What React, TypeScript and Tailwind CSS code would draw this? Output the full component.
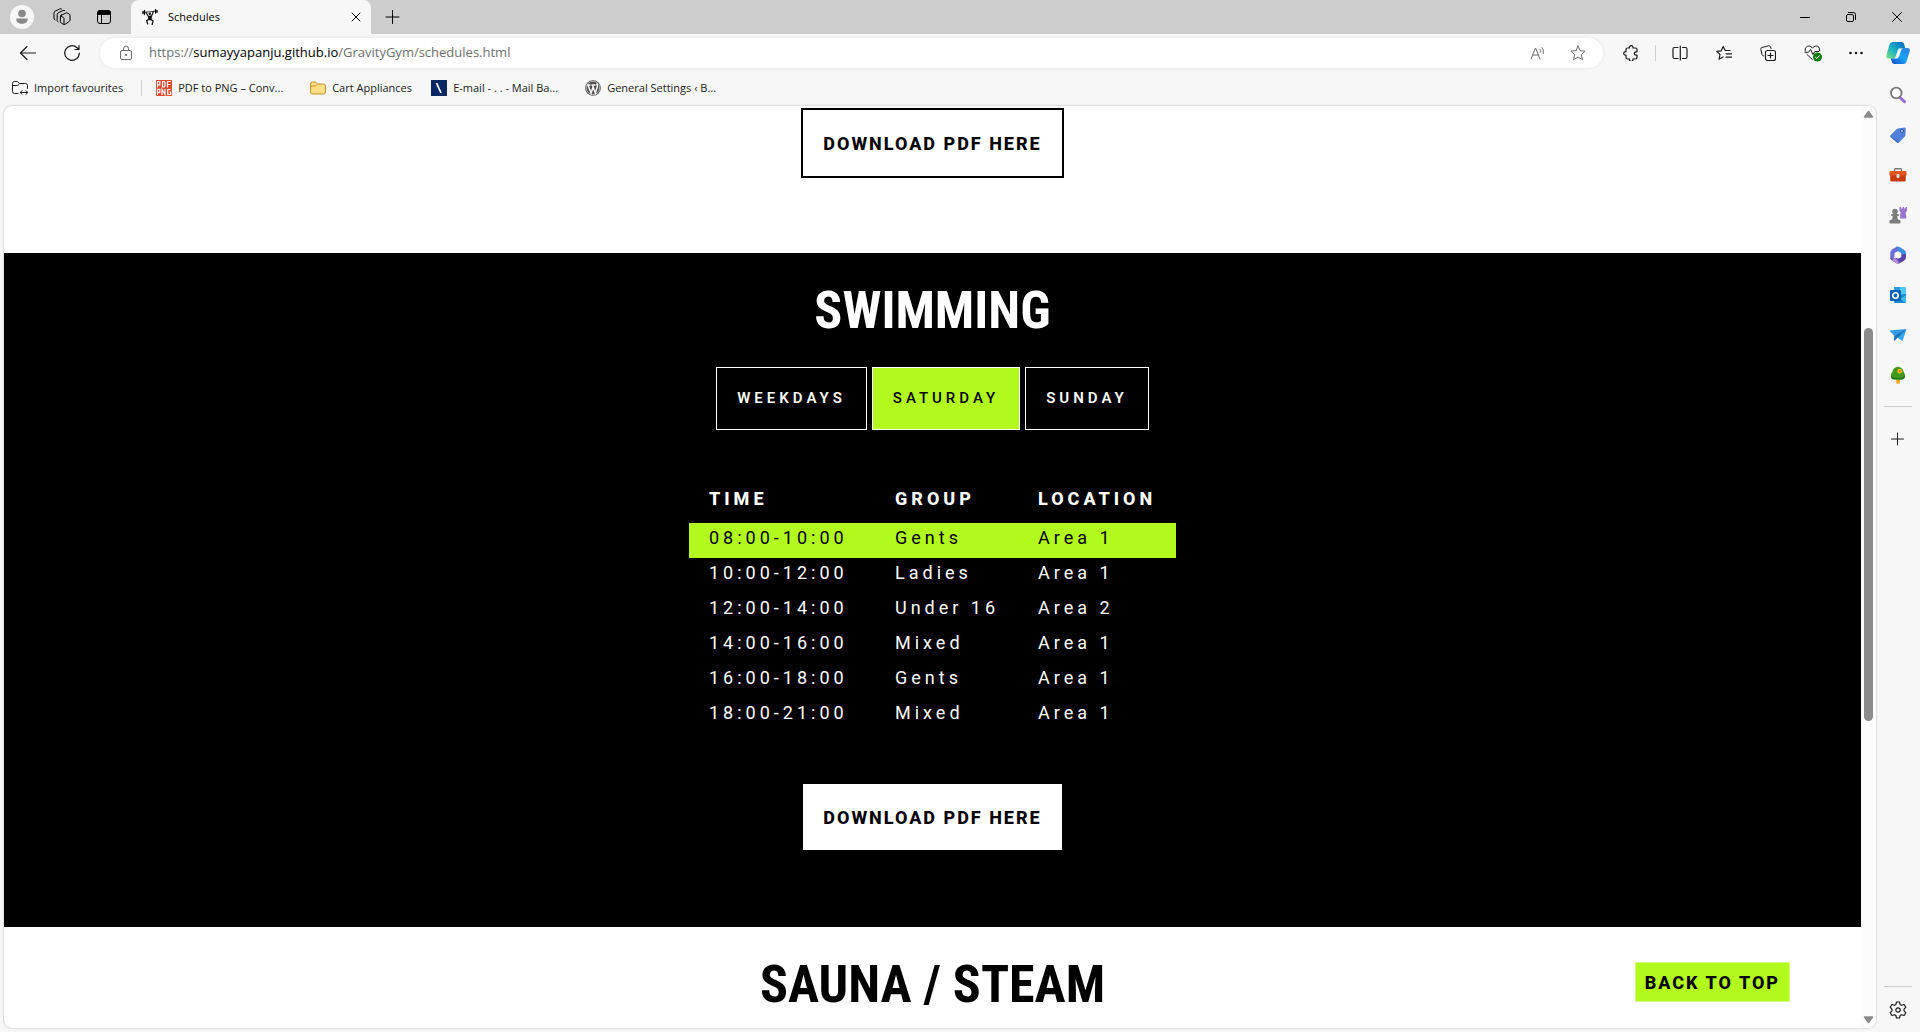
import type { ReactNode } from "react";

type IconProps = { children: ReactNode; size?: string; box?: string };

function Icon({ children, size = "size-4", box = "0 0 16 16" }: IconProps) {
  return (
    <svg
      className={"shrink-0 " + size}
      viewBox={box}
      fill="none"
      stroke="currentColor"
      strokeWidth="1"
      strokeLinecap="round"
      strokeLinejoin="round"
      aria-hidden="true"
    >
      {children}
    </svg>
  );
}

function TitleBar() {
  return (
    <header className="flex h-[34px] shrink-0 items-stretch bg-[#cdcdcd] text-black">
      <div className="flex w-[131px] shrink-0 items-center rounded-br-lg pl-[10px]">
        <button aria-label="Profile" className="size-6 rounded-full bg-[#f7f7f7]">
          <Icon size="size-6" box="0 0 24 24">
            <g fill="#8a8a8a" stroke="none">
              <circle cx="12" cy="8.5" r="3.8" />
              <path d="M6.3 13.5h11.4v.8c0 3-2.6 4.5-5.700 4.500s-5.700-1.500-5.700-4.500z" />
            </g>
          </Icon>
        </button>
        <button aria-label="Workspaces" className="ml-[19px]">
          <Icon size="size-[18px]" box="0 0 18 18">
            <path d="M8.200 7.200l4.500-2.100q1-.4 1.900.1l1.500.8q.9.5.9 1.500v4.500q0 1-.8 1.500l-4 2.700q-1 .6-2 0l-2-1.200q-.8-.5-.8-1.500V8.200q0-.7.800-1z" />
            <path d="M7.800 8l2.600 1.500q.6.4.6 1.100v5.600" />
            <path d="M5.200 14l-.6-.6q-.4-.5-.4-1.200V6.500q0-1 .8-1.500l5-2.500q.9-.4 1.800.1" />
            <path d="M2.200 12l-.8-.8q-.4-.5-.4-1.200V4.800q0-1 .8-1.500l5-2.400q.9-.4 1.800.1" />
          </Icon>
        </button>
        <button aria-label="Tab actions menu" className="ml-[25px]">
          <Icon>
            <rect x="1.500" y="1.500" width="13" height="13" rx="2.500" />
            <path d="M1.500 5V4q0-2.500 2.500-2.500h8q2.500 0 2.500 2.500v1z" fill="currentColor" />
            <path d="M5.500 5v9.500" />
          </Icon>
        </button>
      </div>
      <div className="flex w-[240px] shrink-0 items-center rounded-t-lg bg-[#f7f7f7] pl-[11px] pr-[7px]">
        <svg className="size-4 shrink-0 bg-white" viewBox="0 0 16 16" aria-hidden="true">
          <g stroke="#111" fill="none" strokeLinecap="round">
            <path d="M1 3.500L15 2" strokeWidth=".8" />
            <path d="M2.500 1.500v4M1 2.500v2M13.500 .5v3.500M15 1.500v2" strokeWidth="1.300" />
            <path d="M4 3.500l2.500 4M11.500 2.500L9.500 7" strokeWidth="1.200" />
            <path d="M6.500 10.500l-1.800 1 1 3.500M9 10.500l2 1.500-.8 3.500" strokeWidth="1.300" />
          </g>
          <path d="M6 7l4-.8-.5 5H6.300z" fill="#111" />
          <circle cx="7.800" cy="4.700" r="1.200" fill="#111" />
        </svg>
        <span className="ml-[10px] flex-1 text-[11px]">Schedules</span>
        <button aria-label="Close tab" className="grid size-4 place-items-center">
          <Icon size="size-[10px]" box="0 0 10 10">
            <path d="M1 1l8 8M9 1L1 9" />
          </Icon>
        </button>
      </div>
      <button aria-label="New tab" className="ml-[14px]">
        <Icon>
          <path d="M7.500 1.500v13M1 8h13" />
        </Icon>
      </button>
      <div className="flex-1" />
      <div className="flex items-center gap-[34px] pr-[17px]">
        <button aria-label="Minimise">
          <Icon size="size-3" box="0 0 12 12">
            <path d="M1.500 6.500h9" />
          </Icon>
        </button>
        <button aria-label="Restore">
          <Icon size="size-3" box="0 0 12 12">
            <rect x="1.500" y="3.500" width="7" height="7" rx="1.500" />
            <path d="M3.500 1.500h5q2 0 2 2v5" />
          </Icon>
        </button>
        <button aria-label="Close window">
          <Icon size="size-3" box="0 0 12 12">
            <path d="M1.500 1.500l9 9M10.500 1.500l-9 9" />
          </Icon>
        </button>
      </div>
    </header>
  );
}

function Toolbar() {
  return (
    <div className="flex h-[38px] shrink-0 items-center text-[#1b1b1b]">
      <button aria-label="Back" className="ml-[19px]">
        <Icon size="size-[18px]" box="0 0 18 18">
          <path d="M16.500 9H1.500M8 2.500L1.500 9 8 15.500" strokeWidth="1.200" />
        </Icon>
      </button>
      <button aria-label="Refresh" className="ml-[26px]">
        <Icon size="size-[18px]" box="0 0 18 18">
          <path d="M16.300 9A7.300 7.300 0 1 1 13.800 3.500L15.800 5.300M16 1.500v4h-4" strokeWidth="1.200" />
        </Icon>
      </button>
      <div className="ml-[19px] flex h-[30px] min-w-0 flex-1 items-center rounded-full bg-white pl-[18px] pr-[17px] text-[#6f6f6f] shadow-[0_0_4px_rgba(0,0,0,0.08)]">
        <Icon>
          <rect x="2.500" y="5.500" width="11" height="9" rx="1.500" />
          <path d="M5.500 5.500V3.800Q5.500 1 8 1t2.500 2.800v1.700" />
          <circle cx="8" cy="10" r=".6" fill="currentColor" />
        </Icon>
        <p className="ml-[15px] flex-1 truncate text-[13px]">
          https://<span className="text-black">sumayyapanju.github.io</span>/GravityGym/schedules.html
        </p>
        <button aria-label="Read aloud">
          <Icon>
            <path d="M1 14L5.500 3 10 14M2.600 10h5.800" />
            <path d="M10 4q1.200 1.300.8 3.200M12 2.500q2.300 2.300 1.300 6" />
          </Icon>
        </button>
        <button aria-label="Add to favourites" className="ml-6">
          <Icon>
            <path d="M8 1l2.100 4.600 5 .6-3.700 3.400 1 5L8 12.100l-4.400 2.500 1-5L.9 6.200l5-.6z" />
          </Icon>
        </button>
      </div>
      <div className="ml-5 flex items-center text-[#1b1b1b]">
        <button aria-label="Extensions">
          <Icon>
            <path d="M4.500 3h2a1.800 1.800 0 1 1 3.400 0h2.600q1.500 0 1.500 1.500v2.300h-1a1.700 1.700 0 0 0 0 3.400h1v2.300q0 1.500-1.500 1.500H9.900a1.800 1.800 0 1 1-3.400 0h-2q-1.500 0-1.500-1.500V10a1.700 1.700 0 1 1 0-3.200V4.500Q3 3 4.500 3z" strokeWidth="1.200" />
          </Icon>
        </button>
        <span className="ml-4 h-4 w-px bg-[#cfcfcf]" />
        <button aria-label="Split screen" className="ml-4">
          <Icon>
            <path d="M6 2.500H2.500q-1.500 0-1.500 1.500v8q0 1.500 1.500 1.500H6M10.500 2.500h3q1.500 0 1.500 1.500v8q0 1.500-1.500 1.500h-3M8.300 1v14" strokeWidth="1.200" />
          </Icon>
        </button>
        <button aria-label="Favourites" className="ml-7">
          <Icon>
            <path d="M14 5.500H9.300L7.200 1.500 5.200 5.800.8 6.400 4 9.500l-.9 4.700L7 12M10 8.800h5.500M10 12.200h5.500" strokeWidth="1.200" />
          </Icon>
        </button>
        <button aria-label="Collections" className="ml-7">
          <Icon>
            <path d="M3.500 11Q2.500 11 2.100 9.700L.8 4.500Q.5 3 1.900 2.500L8.500.8q1.500-.3 2 1L11 3.500" />
            <rect x="5.500" y="5.500" width="10" height="10" rx="2" strokeWidth="1.200" />
            <path d="M10.500 8v5M8 10.500h5" strokeWidth="1.200" />
          </Icon>
        </button>
        <button aria-label="Browser essentials" className="ml-7">
          <Icon size="size-[18px]" box="0 0 18 18">
            <path d="M1.200 7C.7 3.500 3 2 4.800 2 6.500 2 7.700 3 8.500 4.200 9.300 3 10.500 2 12.200 2c2 0 4 1.600 3.500 4.800M1 8.300h3.500L6.500 5.500l2.500 5 1.800-3h4M3 10.500l5.300 5" />
            <circle cx="13.500" cy="13" r="4.500" fill="#107c10" stroke="none" />
            <path d="M11.500 13.300l1.300 1.200 2.600-2.800" stroke="#fff" />
          </Icon>
        </button>
        <button aria-label="Settings and more" className="ml-[26px]">
          <Icon>
            <g fill="currentColor" stroke="none">
              <circle cx="2.500" cy="8" r="1.300" />
              <circle cx="8" cy="8" r="1.300" />
              <circle cx="13.500" cy="8" r="1.300" />
            </g>
          </Icon>
        </button>
      </div>
      <button aria-label="Copilot" className="ml-[22px] mr-[10px]">
        <svg className="size-6" viewBox="0 0 24 24" aria-hidden="true">
          <defs>
            <linearGradient id="copA" x1="0" y1="1" x2="1" y2="0">
              <stop offset="0" stopColor="#7be07a" />
              <stop offset=".45" stopColor="#18b4c4" />
              <stop offset="1" stopColor="#0d62c4" />
            </linearGradient>
            <linearGradient id="copB" x1="0" y1="1" x2="1" y2="0">
              <stop offset="0" stopColor="#1547c9" />
              <stop offset=".5" stopColor="#16a4f5" />
              <stop offset="1" stopColor="#2d7ae0" />
            </linearGradient>
          </defs>
          <path d="M6.500 1h9q2 0 2.600 2l1.100 4H14.500q-2 0-2.600 2l-2.200 6.500q-.7 2-3 2H2.500Q-.3 17.500.4 14.500L3.500 3.500Q4.300 1 6.500 1z" fill="url(#copA)" />
          <path d="M17.500 23H8.500q-2 0-2.600-2L4.800 17.500h2q2.300 0 3-2L12 9q.6-2 2.600-2h7q2.800 0 2.200 3l-3.300 10.500q-.8 2.500-3 2.500z" fill="url(#copB)" />
          <path d="M13.500 7.500H17q-1.500.5-2 2.200L13 15.500q-.6 1.600-2 2H7.500q1.700-.3 2.300-2L12 9q.4-1.200 1.500-1.500z" fill="#f3f8fb" />
        </svg>
      </button>
    </div>
  );
}

function BookmarksBar() {
  return (
    <nav aria-label="Favourites bar" className="flex h-8 shrink-0 items-center pl-2 text-[11px] text-[#1b1b1b]">
      <button className="flex items-center gap-[6px]">
        <Icon>
          <path d="M6 13.500H2.500Q.5 13.500.5 11.500v-8q0-2 2-2H5q.7 0 1.200.6L7.500 3.500h6q2 0 2 2v3M.5 5.500H5q.8 0 1.300-.6l1.200-1.400M8.500 12.500h7M10.200 10.500l-2 2 2 2M13.800 10.500l2 2-2 2" />
        </Icon>
        Import favourites
      </button>
      <span className="ml-[18px] h-4 w-px bg-[#cfcfcf]" />
      <a href="#pdf" className="ml-[14px] flex w-[154px] items-center gap-[6px]">
        <svg className="size-4 shrink-0" viewBox="0 0 16 16" aria-hidden="true">
          <rect width="16" height="16" fill="#d9482f" />
          <g stroke="#fff" strokeWidth="1.200" fill="none">
            <path d="M1.500 7.500v-6h2.300v3.300H1.500M6.500 1.500v5.400h1.500l1-1v-3.400l-1-1H6M11.500 7.500v-6h3.300M11.500 4.500h2.800" />
            <path d="M1.500 15V9.300h2.300v3H1.500M6 15V9.500l3 5V9M14.700 9.500h-3v5h3v-2.300h-1.200" />
          </g>
        </svg>
        PDF to PNG – Conv...
      </a>
      <a href="#cart" className="flex w-[121px] items-center gap-[6px]">
        <svg className="size-4 shrink-0" viewBox="0 0 16 16" aria-hidden="true">
          <path d="M.5 4q0-2 2-2H5q.7 0 1.200.5L7.500 4h6q2 0 2 2v6q0 2-2 2h-11q-2 0-2-2z" fill="#ffdf85" stroke="#c0912b" />
          <path d="M.5 6H5q.8 0 1.300-.6L7.500 4" fill="none" stroke="#c0912b" />
        </svg>
        Cart Appliances
      </a>
      <a href="#mail" className="flex w-[154px] items-center gap-[6px]">
        <svg className="size-4 shrink-0" viewBox="0 0 16 16" aria-hidden="true">
          <rect width="16" height="16" fill="#0b2763" />
          <path d="M5.500 3l4.500 10" stroke="#fff" strokeWidth="1.700" />
        </svg>
        E-mail - . . - Mail Ba...
      </a>
      <a href="#wordpress" className="flex items-center gap-[6px]">
        <svg className="size-4 shrink-0" viewBox="0 0 16 16" aria-hidden="true">
          <circle cx="8" cy="8" r="7.800" fill="#50504f" />
          <circle cx="8" cy="8" r="6.700" fill="none" stroke="#ddd" strokeWidth=".7" />
          <path d="M2 5h3.500M6.500 5h4M3 5l3 8 2.200-6M7.300 5l3 8 2-6q.5-1.700-.8-3.500" fill="none" stroke="#fff" strokeWidth="1.500" />
        </svg>
        General Settings ‹ B...
      </a>
    </nav>
  );
}

function Sidebar() {
  return (
    <aside className="flex w-11 shrink-0 flex-col items-center pb-[13px] pt-[14px] text-[#1b1b1b]">
      <div className="flex flex-col gap-[22px]">
        <button aria-label="Search">
          <Icon size="size-[18px]" box="0 0 18 18">
            <path d="M11.500 12l4 3.700" stroke="#9a6ad4" strokeWidth="3" />
            <circle cx="7.300" cy="7" r="5.300" stroke="#7a7a7a" strokeWidth="1.800" fill="#fff" />
          </Icon>
        </button>
        <button aria-label="Shopping">
          <Icon size="size-[18px]" box="0 0 18 18">
            <path d="M9 2.500L15.500 1.500q1.300-.1 1.200 1.200L16.500 9q0 .8-.6 1.400L10 16.500q-1 1-2 0L1.700 11q-1-1 0-2L7.500 3.200q.6-.6 1.500-.7z" fill="#5080db" stroke="none" />
            <path d="M1.500 9.500l8.500 7L8 16.500 1.700 11z" fill="#3563b8" stroke="none" />
            <circle cx="13" cy="5" r="1.500" fill="#dcecff" stroke="#284e9e" />
          </Icon>
        </button>
        <button aria-label="Tools">
          <Icon size="size-[18px]" box="0 0 18 18">
            <path d="M5.500 5.500V3.800Q5.500 2.700 6.600 2.700h4.800q1.100 0 1.100 1.100v1.700" stroke="#777" strokeWidth="1.400" />
            <rect x=".5" y="5" width="17" height="5" rx="1" fill="#e2551f" stroke="none" />
            <path d="M1.200 9.500h15.600V14q0 1.500-1.500 1.500H2.700q-1.500 0-1.500-1.500z" fill="#c63a0c" stroke="none" />
            <rect x="7.500" y="8" width="3" height="4" rx="1" fill="#ddd" stroke="none" />
          </Icon>
        </button>
        <button aria-label="Games">
          <Icon size="size-[18px]" box="0 0 18 18">
            <path d="M10.500 1h1.600v1.500h1.500V1h1.500v1.500h1.400V1H18v4l-1.200 1 .5 6.500H11L11.600 6l-1.100-1z" fill="#9b72cf" stroke="none" />
            <g fill="#7d7d7d" stroke="none">
              <circle cx="6" cy="5.500" r="2.800" />
              <path d="M2.300 8h7.400v2H8.200q0 3 1.800 4H2q1.800-1 1.800-4H2.300z" />
              <rect x=".5" y="14" width="11" height="3.500" rx="1.200" />
            </g>
          </Icon>
        </button>
        <button aria-label="Microsoft 365">
          <Icon size="size-[18px]" box="0 0 18 18">
            <g stroke="none">
              <path d="M7.500.8q1.500-.6 3 .2l4.500 2.700Q17 5 17 7v5l-5-1V8L6.500 4.500z" fill="#3b8fe0" />
              <path d="M7.500.8L3 3.500Q1.300 4.700 1.300 7v4.300q0 2 1.700 1.700 2.700-.6 2.700-3V7.200L10 4.500z" fill="#6b6fd8" />
              <path d="M17 8v3.500q0 2-2 3.200L10.500 17.300q-1.500.7-3 0L2.200 14q-1-1-.9-2.800Q3 13.500 6 12l6.200-3.500z" fill="#5a46a8" />
              <path d="M2.200 14l5.300 3.200q1.500.8 3 .1L6.700 12Q4 13.500 2.200 14z" fill="#b78be0" />
              <path d="M9 5.200l3.300 1.900v3.800L9 12.800l-3.300-1.900V7.100z" fill="#f7f7f7" />
            </g>
          </Icon>
        </button>
        <button aria-label="Outlook">
          <Icon size="size-[18px]" box="0 0 18 18">
            <g stroke="none">
              <rect x="5" y="1" width="12" height="9" rx="1" fill="#50c8f0" />
              <rect x="5" y="1" width="6" height="5" fill="#28a0de" />
              <path d="M5 9l12-1v8q0 1-1 1H6q-1 0-1-1z" fill="#1a87d0" />
              <path d="M17 9l-6 4 6 4z" fill="#3cb8ee" />
              <rect x="1" y="4" width="11" height="11" rx="1" fill="#0a62b8" />
            </g>
            <circle cx="6.500" cy="9.500" r="2.700" stroke="#fff" strokeWidth="1.600" />
          </Icon>
        </button>
        <button aria-label="Drop">
          <Icon size="size-[18px]" box="0 0 18 18">
            <g stroke="none">
              <path d="M.5 4.500L17.500 3 5.500 10z" fill="#2f9be8" />
              <path d="M17.500 3L13.500 15 8 11.500z" fill="#31a8ee" />
              <path d="M17.500 3L5.500 10l-.5 5z" fill="#0e5a9e" />
              <path d="M17.500 3L8 11.500 5 15l.8-5z" fill="#1674bd" />
            </g>
          </Icon>
        </button>
        <button aria-label="Tree">
          <Icon size="size-[18px]" box="0 0 18 18">
            <g stroke="none">
              <rect x="7.300" y="12" width="3.600" height="5.700" rx="1" fill="#f5a91c" />
              <path d="M9 .8C12 .8 14 3 14.700 6 17 9 16.500 13.500 12.500 13.500h-7C1.500 13.500 1 9 3.300 6 4 3 6 .8 9 .8z" fill="#3f9a1d" />
              <path d="M2 10q7 4 14 0-.3 3.500-3.500 3.500h-7Q2.300 13.500 2 10z" fill="#227a17" />
              <circle cx="10.700" cy="5.200" r="2.400" fill="#ffb81c" />
              <circle cx="10.700" cy="5.200" r=".9" fill="#e0600c" />
            </g>
          </Icon>
        </button>
      </div>
      <span className="mt-[22px] h-px w-7 bg-[#cfcfcf]" />
      <button aria-label="Customise" className="mt-6">
        <Icon>
          <path d="M7.500 2v12M1.500 8h12" />
        </Icon>
      </button>
      <div className="flex-1" />
      <span className="h-px w-7 bg-[#cfcfcf]" />
      <button aria-label="Sidebar settings" className="mt-[14px]">
        <Icon size="size-[18px]" box="0 0 18 18">
          <path d="M7.500 1h3l.6 2.400 1.500.9 2.500-.8 1.700 2.800L15 8.200v1.600l1.800 1.900-1.700 2.800-2.500-.8-1.500.9-.6 2.400h-3l-.6-2.400-1.500-.9-2.500.8-1.700-2.800L3 9.800V8.200L1.200 6.300l1.700-2.800 2.500.8 1.500-.9z" strokeWidth="1.200" />
          <circle cx="9" cy="9" r="2.200" strokeWidth="1.200" />
        </Icon>
      </button>
    </aside>
  );
}

const sessions = [
  ["08:00-10:00", "Gents", "Area 1"],
  ["10:00-12:00", "Ladies", "Area 1"],
  ["12:00-14:00", "Under 16", "Area 2"],
  ["14:00-16:00", "Mixed", "Area 1"],
  ["16:00-18:00", "Gents", "Area 1"],
  ["18:00-21:00", "Mixed", "Area 1"],
];

const headingClass =
  "font-['Roboto_Condensed','Open_Sans_Condensed',sans-serif] text-[52px] font-bold leading-[64px]";

function GymPage() {
  return (
    <div className="flex min-w-0 flex-1 flex-col font-['Roboto',sans-serif] text-black">
      <section className="flex flex-col items-center pb-[75px] pt-[2px]">
        <a
          href="#gym-pdf"
          className="flex h-[70px] items-center border-2 border-black px-5 text-[18px] font-extrabold tracking-[2px]"
        >
          DOWNLOAD PDF HERE
        </a>
      </section>

      <section className="flex flex-col items-center bg-black pb-[77px] pt-[26px] text-white">
        <h2 className={headingClass}>SWIMMING</h2>
        <div className="mt-6 flex gap-[5px] text-[15px] font-semibold">
          <button className="h-[63px] border border-white px-5 tracking-[4px]">WEEKDAYS</button>
          <button className="h-[63px] border border-white bg-[#b2fa1e] px-5 font-medium tracking-[4px] text-black">
            SATURDAY
          </button>
          <button className="h-[63px] border border-white px-5 tracking-[4px]">SUNDAY</button>
        </div>
        <table className="mt-[43px] w-[487px] table-fixed text-left text-[18px] tracking-[4px]">
          <colgroup>
            <col className="w-[186px]" />
            <col className="w-[143px]" />
            <col />
          </colgroup>
          <thead>
            <tr className="h-[50px]">
              <th scope="col" className="pl-5 font-extrabold">TIME</th>
              <th scope="col" className="pl-5 font-extrabold">GROUP</th>
              <th scope="col" className="pl-5 font-extrabold">LOCATION</th>
            </tr>
          </thead>
          <tbody>
            {sessions.map((row, i) => (
              <tr key={row[0]} className={i === 0 ? "h-[35px] bg-[#b2fa1e] text-black" : "h-[35px]"}>
                {row.map((cell) => (
                  <td key={cell} className="whitespace-nowrap pb-[6px] pl-5 leading-7">{cell}</td>
                ))}
              </tr>
            ))}
          </tbody>
        </table>
        <a
          href="#swimming-pdf"
          className="mt-[51px] flex h-[66px] items-center bg-white px-5 text-[18px] font-extrabold tracking-[2px] text-black"
        >
          DOWNLOAD PDF HERE
        </a>
      </section>

      <section className="flex flex-col items-center pt-[26px]">
        <h2 className={headingClass}>SAUNA / STEAM</h2>
      </section>
    </div>
  );
}

export default function App() {
  return (
    <div className="flex h-screen flex-col overflow-hidden bg-[#f7f7f7] font-['Open_Sans','Noto_Sans',sans-serif]">
      <TitleBar />
      <Toolbar />
      <div className="flex min-h-0 flex-1">
        <div className="flex min-w-0 flex-1 flex-col pb-1 pl-1">
          <BookmarksBar />
          <main className="relative mt-[2px] flex min-h-0 flex-1 overflow-hidden rounded-lg bg-white shadow-[0_0_2px_rgba(0,0,0,0.35)]">
            <GymPage />
            <div className="flex w-[15px] shrink-0 flex-col items-center bg-[#fcfcfc] py-1">
              <svg className="h-[9px] w-[11px]" viewBox="0 0 11 9" aria-hidden="true">
                <path d="M5.500 1.500L9.500 7h-8z" fill="#8b8b8b" stroke="#8b8b8b" strokeWidth="1.500" strokeLinejoin="round" />
              </svg>
              <div className="mb-[294px] mt-[209px] w-[9px] flex-1 rounded-full bg-[#8b8b8b]" />
              <svg className="h-[9px] w-[11px]" viewBox="0 0 11 9" aria-hidden="true">
                <path d="M5.500 7.500L9.500 2h-8z" fill="#8b8b8b" stroke="#8b8b8b" strokeWidth="1.500" strokeLinejoin="round" />
              </svg>
            </div>
            <a
              href="#top"
              className="absolute bottom-[26px] right-[86px] flex h-10 items-center border border-[#d4fb80] bg-[#b2fa1e] px-[9px] font-['Roboto',sans-serif] text-[18px] font-extrabold tracking-[2px] text-black"
            >
              BACK TO TOP
            </a>
          </main>
        </div>
        <Sidebar />
      </div>
    </div>
  );
}
